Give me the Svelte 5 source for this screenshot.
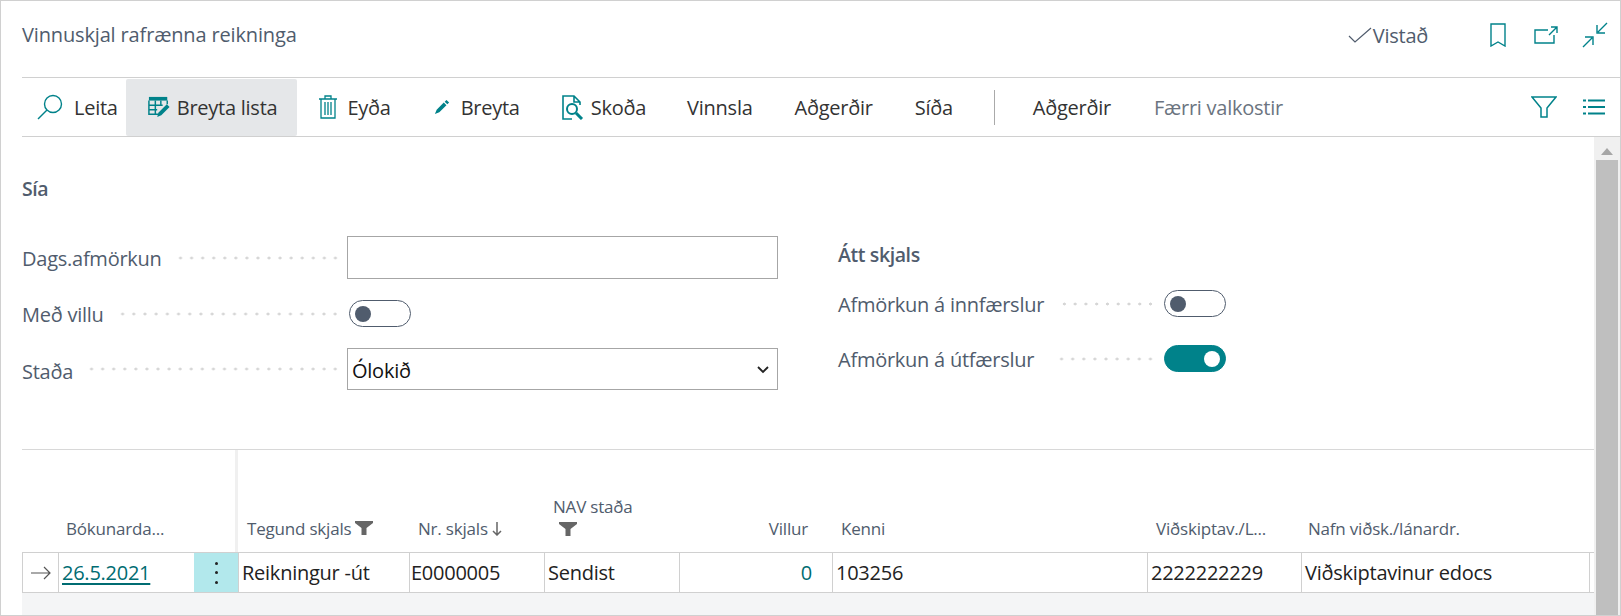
<script>
    const actions = ['Vinnsla', 'Aðgerðir', 'Síða'];

    const columns = [
        { label: 'Tegund skjals', value: 'Reikningur -út', filter: true, cls: 'type' },
        { label: 'Nr. skjals', value: 'E0000005', sort: true, cls: 'nr' },
        { label: 'NAV staða', value: 'Sendist', filter: true, stacked: true, cls: 'nav' },
        { label: 'Villur', value: '0', cls: 'errors' },
        { label: 'Kenni', value: '103256', cls: 'id' },
        { label: 'Viðskiptav./L...', value: '2222222229', cls: 'cust' },
        { label: 'Nafn viðsk./lánardr.', value: 'Viðskiptavinur edocs', cls: 'name' },
    ];
</script>

{#snippet funnel()}
    <svg class="funnel" viewBox="0 0 18 14" width="18" height="14">
        <path d="M0 0h18v2l-6.5 5v7h-5V7L0 2z" fill="#666" />
    </svg>
{/snippet}

<div class="page">
    <header class="top">
        <h1>Vinnuskjal rafrænna reikninga</h1>
        <div class="saved">
            <svg viewBox="0 0 24 16" width="24" height="16" fill="none" stroke="#505c6d" stroke-width="1.2">
                <path d="M1 9l6 6L23 1" />
            </svg>
            <span>Vistað</span>
        </div>
        <div class="top-icons">
            <svg viewBox="0 0 16 24" width="16" height="24" fill="none" stroke="#00828a" stroke-width="1.4">
                <path d="M1 1h14v22l-7-4-7 4z" />
            </svg>
            <svg class="open" viewBox="0 0 24 18" width="24" height="18" fill="none" stroke="#00828a" stroke-width="1.4">
                <path d="M14 4H1v13h19V9M15 9l8-8M17 1h6v6" />
            </svg>
            <svg viewBox="0 0 26 26" width="26" height="26" fill="none" stroke="#00828a" stroke-width="1.4">
                <path d="M25 1l-9 9M15 3v8h8M1 25l9-9M3 15h8v8" />
            </svg>
        </div>
    </header>

    <nav class="toolbar">
        <button class="tool search">
            <svg viewBox="0 0 26 26" width="26" height="26" fill="none" stroke="#00828a" stroke-width="1.4">
                <circle cx="16" cy="10" r="8.5" />
                <path d="M10 16L1 25" />
            </svg>
            Leita
        </button>
        <button class="tool active">
            <svg viewBox="0 0 24 24" width="24" height="22">
                <path d="M1 1h20v4H1z" fill="#00828a" />
                <path d="M1 5v15h11M8 5v15M14 5v5M1 10h15M1 15h9M21 5v4" fill="none" stroke="#00828a" stroke-width="1.6" />
                <path d="M10 23l1.500-5 9-9 3 3-9 9z" fill="#00828a" />
            </svg>
            Breyta lista
        </button>
        <button class="tool wide">
            <svg viewBox="0 0 18 24" width="18" height="24" fill="none" stroke="#00828a" stroke-width="1.3">
                <path d="M0 4h18M6 4V1h6v3M2 4v19h14V4M6 7v13M9 7v13M12 7v13" />
            </svg>
            Eyða
        </button>
        <button class="tool wide">
            <svg viewBox="0 0 18 18" width="18" height="16">
                <path d="M1 17l2-5L11 4l3 3-8 8zM12 3l2-2 3 3-2 2z" fill="#00828a" />
            </svg>
            Breyta
        </button>
        <button class="tool wide view">
            <svg viewBox="0 0 22 25" width="22" height="25" fill="none" stroke="#00828a" stroke-width="1.6">
                <path d="M10 24H1V1h11l6 6v3M12 1v6h6" />
                <circle cx="10" cy="14" r="5" stroke-width="2" />
                <path d="M14 18l6 6" stroke-width="3" />
            </svg>
            Skoða
        </button>
        {#each actions as action}
            <button class="tool">{action}</button>
        {/each}
        <span class="divider"></span>
        <button class="tool">Aðgerðir</button>
        <button class="tool muted">Færri valkostir</button>
        <div class="tool-icons">
            <svg viewBox="0 0 26 22" width="26" height="22" fill="none" stroke="#00828a" stroke-width="1.5">
                <path d="M1 1h24l-9 11v9h-6v-9z" />
            </svg>
            <svg viewBox="0 0 22 16" width="22" height="16" stroke="#00828a" stroke-width="1.8">
                <path d="M0 1.500h3M5 1.500h17M0 8h3M5 8h17M0 14.500h3M5 14.500h17" />
            </svg>
        </div>
    </nav>

    <div class="body">
        <main>
            <section class="filters">
                <h2>Sía</h2>
                <div class="form">
                    <div class="col left">
                        <div class="field date">
                            <span class="label">Dags.afmörkun</span>
                            <span class="dots"></span>
                            <span class="input"></span>
                        </div>
                        <div class="field error">
                            <span class="label">Með villu</span>
                            <span class="dots"></span>
                            <div class="control"><span class="toggle"></span></div>
                        </div>
                        <div class="field status">
                            <span class="label">Staða</span>
                            <span class="dots"></span>
                            <span class="input select">
                                Ólokið
                                <svg viewBox="0 0 12 8" width="12" height="8" fill="none" stroke="#222" stroke-width="1.8">
                                    <path d="M1 1l5 5 5-5" />
                                </svg>
                            </span>
                        </div>
                    </div>
                    <div class="col right">
                        <h3>Átt skjals</h3>
                        <div class="field in">
                            <span class="label">Afmörkun á innfærslur</span>
                            <span class="dots"></span>
                            <span class="toggle"></span>
                        </div>
                        <div class="field out">
                            <span class="label">Afmörkun á útfærslur</span>
                            <span class="dots"></span>
                            <span class="toggle on"></span>
                        </div>
                    </div>
                </div>
            </section>

            <section class="list">
                <div class="row head">
                    <div class="c arrow"></div>
                    <div class="c date">Bókunarda...</div>
                    <div class="c menu"></div>
                    {#each columns as col}
                        <div class="c {col.cls}" class:stacked={col.stacked}>
                            <span>{col.label}</span>
                            {#if col.filter}{@render funnel()}{/if}
                            {#if col.sort}
                                <svg class="sort" viewBox="0 0 10 14" width="10" height="14" fill="none" stroke="#666" stroke-width="1.5">
                                    <path d="M5 0v13M1 9l4 4 4-4" />
                                </svg>
                            {/if}
                        </div>
                    {/each}
                </div>
                <div class="row data">
                    <div class="c arrow">
                        <svg viewBox="0 0 20 14" width="20" height="14" fill="none" stroke="#555" stroke-width="1.2">
                            <path d="M0 7h19M13 1l6 6-6 6" />
                        </svg>
                    </div>
                    <div class="c date"><a href="#top">26.5.2021</a></div>
                    <div class="c menu"><i></i><i></i><i></i></div>
                    {#each columns as col}
                        <div class="c {col.cls}">{col.value}</div>
                    {/each}
                    <div class="c rest"></div>
                </div>
                <div class="band"></div>
            </section>
        </main>

        <aside class="scrollbar">
            <span class="up"></span>
            <span class="thumb"></span>
        </aside>
    </div>
</div>

<style>
    :global(body) {
        margin: 0;
        background: #fff;
    }

    .page {
        display: flex;
        flex-direction: column;
        box-sizing: border-box;
        width: 1621px;
        height: 616px;
        overflow: hidden;
        border: 1px solid #d0d0d0;
        font-family: 'Open Sans', sans-serif;
        font-size: 20px;
        letter-spacing: -0.25px;
        color: #505c6d;
    }

    .top {
        display: flex;
        align-items: center;
        flex: none;
        height: 76px;
        margin-left: 21px;
        border-bottom: 1px solid #d0d0d0;
    }

    h1 {
        flex: 1;
        margin: 0 0 10px;
        font-size: 20px;
        font-weight: 400;
        letter-spacing: -0.15px;
    }

    .saved {
        display: flex;
        align-items: center;
        gap: 1px;
        margin: 0 62px 8px 0;
    }

    .top-icons {
        display: flex;
        align-items: center;
        gap: 28px;
        margin: 0 12px 8px 0;
    }

    .open {
        margin-right: -4px;
    }

    .toolbar {
        display: flex;
        align-items: center;
        flex: none;
        height: 58px;
        margin-left: 21px;
        border-bottom: 1px solid #d0d0d0;
    }

    .tool {
        display: flex;
        align-items: center;
        gap: 6px;
        height: 57px;
        padding: 0 21px;
        border: 0;
        border-radius: 2px;
        background: none;
        font: inherit;
        letter-spacing: inherit;
        color: #333;
    }

    .wide {
        gap: 10px;
        padding: 0 20px 0 22px;
    }

    .view {
        gap: 7px;
    }

    .search {
        gap: 11px;
        padding: 0 8px 0 15px;
    }

    .active {
        padding: 0 20px 0 21px;
        background: #e5e7e9;
    }

    .muted {
        margin-left: 1px;
        color: #6b7480;
    }

    .divider {
        width: 1px;
        height: 35px;
        margin: 0 17px 0 20px;
        background: #aaa;
    }

    .tool-icons {
        display: flex;
        align-items: center;
        gap: 26px;
        margin: 0 15px 0 auto;
    }

    .body {
        display: flex;
        flex: 1;
        min-height: 0;
    }

    main {
        flex: 1;
        min-width: 0;
        display: flex;
        flex-direction: column;
        padding-left: 21px;
    }

    .filters {
        flex: none;
        height: 313px;
        box-sizing: border-box;
        padding-top: 40px;
        border-bottom: 1px solid #d8d8d8;
    }

    h2,
    h3 {
        margin: 0;
        font-size: 19.500px;
        font-weight: 600;
        letter-spacing: -0.4px;
        line-height: 24px;
    }

    .form {
        display: flex;
        gap: 60px;
        margin-top: 35px;
    }

    .col {
        display: flex;
        flex-direction: column;
    }

    .left {
        width: 756px;
        gap: 26px;
    }

    .right {
        width: 388px;
    }

    .field {
        display: flex;
        align-items: center;
    }

    .label {
        flex: none;
        position: relative;
        top: 1px;
        line-height: 24px;
    }

    .status .label {
        top: 3px;
    }

    .dots {
        flex: 1;
        height: 4px;
        margin: 0 8px 0 15px;
        background: radial-gradient(circle, #d6d6d6 1.3px, transparent 1.7px) 0 0 / 11px 4px round;
    }

    .left .dots {
        margin: 0 6px 0 13px;
    }

    .out .dots {
        margin-left: 22px;
    }

    .input {
        display: flex;
        align-items: center;
        justify-content: space-between;
        flex: none;
        box-sizing: border-box;
        width: 431px;
        height: 43px;
        padding: 2px 8px 0 4px;
        border: 1px solid #a6a6a6;
        color: #111;
    }

    .select {
        height: 42px;
    }

    .control {
        flex: none;
        width: 431px;
        padding-left: 2px;
        box-sizing: border-box;
    }

    .toggle {
        display: flex;
        align-items: center;
        flex: none;
        box-sizing: border-box;
        width: 62px;
        height: 27px;
        padding-left: 5px;
        border: 1px solid #505c6d;
        border-radius: 14px;
    }

    .toggle::before {
        content: '';
        width: 16px;
        height: 16px;
        border-radius: 50%;
        background: #505c6d;
    }

    .toggle.on {
        justify-content: flex-end;
        padding: 0 5px 0 0;
        border-color: #00828a;
        background: #00828a;
    }

    .toggle.on::before {
        background: #fff;
    }

    .left .error {
        height: 27px;
        margin: -5px 0 -5px;
    }

    .right h3 {
        margin-top: 7px;
    }

    .right .field {
        margin-top: 23px;
    }

    .right .field.out {
        margin-top: 28px;
    }

    .list {
        flex: 1;
        display: flex;
        flex-direction: column;
        min-height: 0;
    }

    .row {
        display: grid;
        grid-template-columns: 36px 135px 45px 171px 135px 135px 153px 315px 154px 288px 1fr;
        flex: none;
    }

    .head {
        height: 102px;
        font-size: 17px;
        letter-spacing: -0.2px;
    }

    .head .c {
        display: flex;
        align-items: flex-end;
        gap: 4px;
        padding: 0 0 12px 9px;
    }

    .head .menu {
        border-right: 3px solid #f0f0f0;
    }

    .head .date {
        padding-left: 8px;
    }

    .head .funnel {
        margin-bottom: 5px;
    }

    .head .sort {
        margin-bottom: 4px;
    }

    .head .name {
        padding-left: 7px;
    }

    .head .errors {
        justify-content: flex-end;
        padding-right: 24px;
    }

    .head .stacked {
        flex-direction: column;
        justify-content: flex-end;
        align-items: flex-start;
        gap: 4px;
    }

    .head .stacked .funnel {
        margin: 0 0 4px 6px;
    }

    .data {
        height: 41px;
        box-sizing: border-box;
        border: 1px solid #d0d0d0;
        border-right: 0;
        color: #222;
    }

    .data .c {
        display: flex;
        align-items: center;
        padding: 1px 3px 0;
        border-right: 1px solid #d0d0d0;
        line-height: 38px;
    }

    .data .arrow {
        padding-left: 8px;
    }

    .data .nr {
        padding-left: 1px;
    }

    .data .date {
        border-right: 0;
    }

    .data .rest {
        border-right: 0;
    }

    a {
        color: #006c72;
        text-decoration: underline;
        text-decoration-thickness: 2px;
        text-underline-offset: 3px;
    }

    .data .menu {
        flex-direction: column;
        justify-content: center;
        gap: 6.500px;
        padding: 0;
        background: #b2e8ec;
    }

    .menu i {
        width: 3px;
        height: 3px;
        border-radius: 50%;
        background: #222;
    }

    .data .errors {
        justify-content: flex-end;
        padding-right: 20px;
        color: #006c72;
    }

    .band {
        flex: 1;
        background: #f4f5f6;
    }

    .scrollbar {
        display: flex;
        flex-direction: column;
        align-items: center;
        flex: none;
        width: 26px;
        background: #f0f0f0;
    }

    .up {
        margin-top: 11px;
        border: 6px solid transparent;
        border-top: 0;
        border-bottom: 7px solid #a6a6a6;
    }

    .thumb {
        flex: 1;
        width: 22px;
        margin-top: 5px;
        background: #bfbfbf;
    }
</style>
